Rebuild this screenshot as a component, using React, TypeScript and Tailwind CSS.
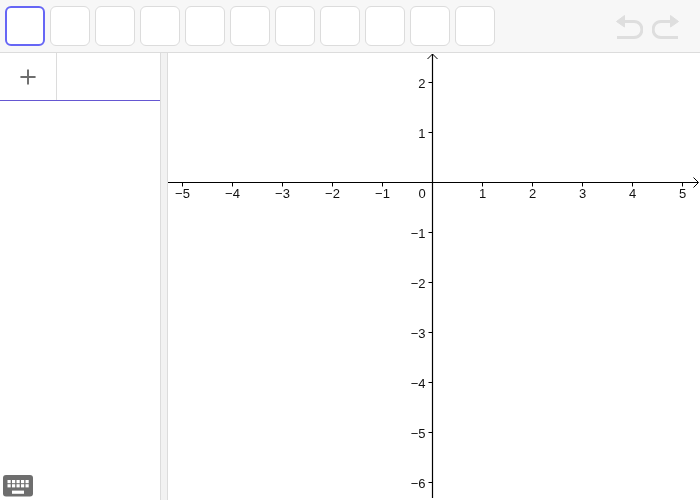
import { Plus } from "lucide-react";

const tools = [0, 1, 2, 3, 4, 5, 6, 7, 8, 9, 10];
const xValues = [-5, -4, -3, -2, -1, 1, 2, 3, 4, 5];
const yValues = [2, 1, -1, -2, -3, -4, -5, -6];

// origin of the axes inside the graphics view
const ox = 264.5;
const oy = 129.5;
const unit = 50;

function label(n: number) {
  return n < 0 ? `\u2212${-n}` : `${n}`;
}

function Graph() {
  return (
    <svg width="532" height="445" className="block will-change-transform" style={{ fontFamily: "'Liberation Sans', Arial, sans-serif" }}>
      <line x1="0" y1={oy} x2="530" y2={oy} stroke="#000" strokeWidth="1.2" />
      <line x1={ox} y1="1" x2={ox} y2="445" stroke="#000" strokeWidth="1.2" />
      <path d="M525.5 124.5 L530.5 129.5 L525.5 134.5" fill="none" stroke="#000" />
      <path d="M259.5 6 L264.5 1 L269.5 6" fill="none" stroke="#000" />
      {xValues.map((v) => (
        <g key={v}>
          <line x1={ox + v * unit} y1={oy} x2={ox + v * unit} y2={oy + 4} stroke="#000" />
          <text x={ox + v * unit} y={oy + 15.5} fontSize="13" textAnchor="middle" fill="#111">
            {label(v)}
          </text>
        </g>
      ))}
      <text x={ox - 10.5} y={oy + 15.5} fontSize="13" textAnchor="middle" fill="#111">0</text>
      {yValues.map((v) => (
        <g key={v}>
          <line x1={ox - 4} y1={oy - v * unit} x2={ox} y2={oy - v * unit} stroke="#000" />
          <text x={ox - 7} y={oy - v * unit + 5.5} fontSize="13" textAnchor="end" fill="#111">
            {label(v)}
          </text>
        </g>
      ))}
    </svg>
  );
}

function KeyboardIcon() {
  return (
    <svg width="30" height="22" viewBox="0 0 30 22">
      <rect width="30" height="21.5" rx="3" fill="#6e6e6e" />
      <g fill="#fff">
        {[4.5, 9, 13.5, 18, 22.5].map((x) => (
          <g key={x}>
            <rect x={x} y="5" width="3.2" height="3.2" />
            <rect x={x} y="9.2" width="3.2" height="3.2" />
          </g>
        ))}
        <rect x="9" y="15.6" width="12" height="3.2" />
      </g>
    </svg>
  );
}

export default function App() {
  return (
    <div className="flex h-[500px] w-[700px] flex-col overflow-hidden bg-white">
      <div className="flex h-[53px] shrink-0 items-start justify-between border-b border-[#dcdcdc] bg-[#f7f7f7] pl-[5px] pr-[20px]">
        <div className="mt-[6px] flex gap-[5px]">
          {tools.map((t) => (
            <div
              key={t}
              className={
                t === 0
                  ? "h-10 w-10 rounded-[6px] border-2 border-[#6666f5] bg-white"
                  : "h-10 w-10 rounded-[6px] border border-[#dcdcdc] bg-white"
              }
            />
          ))}
        </div>
        <div className="mt-[14px] flex gap-[9px]">
          <svg width="28" height="26" viewBox="0 0 28 26" fill="none" stroke="#dedede" strokeWidth="3">
            <path d="M5 7.5 H19 C29.5 7.5 29.5 23.5 19 23.5 H2" />
            <path d="M9.5 1.5 L1.5 7.5 L9.5 13 Z" fill="#dedede" strokeWidth="1" />
          </svg>
          <svg width="28" height="26" viewBox="0 0 28 26" fill="none" stroke="#dedede" strokeWidth="3">
            <path d="M23 7.5 H9 C-1.5 7.5 -1.5 23.5 9 23.5 H26" />
            <path d="M18.5 1.5 L26.5 7.5 L18.5 13 Z" fill="#dedede" strokeWidth="1" />
          </svg>
        </div>
      </div>
      <div className="flex min-h-0 flex-1">
        <div className="flex w-[160px] shrink-0 flex-col justify-between">
          <div className="flex h-[48px] border-b border-[#6557d2]">
            <div className="flex w-[57px] items-center justify-center border-r border-[#dcdcdc]">
              <Plus size={26} strokeWidth={1.8} strokeLinecap="butt" color="#6e6e6e" />
            </div>
          </div>
          <div className="pb-[3px] pl-[3px]">
            <KeyboardIcon />
          </div>
        </div>
        <div className="w-2 shrink-0 border-x border-[#dcdcdc] bg-[#f2f2f2]" />
        <Graph />
      </div>
    </div>
  );
}
